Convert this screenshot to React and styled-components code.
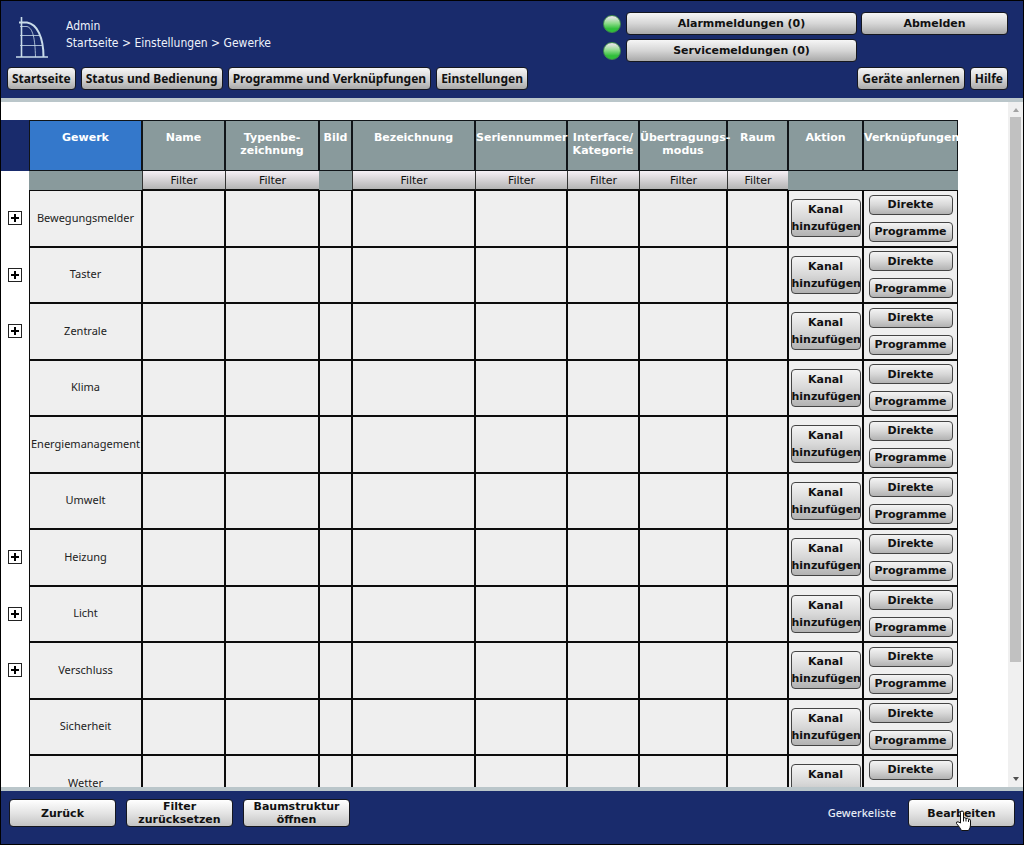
import React from "react";
import styled, { createGlobalStyle } from "styled-components";

const NAVY = "#192b6c";
const SLATE = "#899a9c";
const STRIP = "#bac6ca";
const BOLD_FONT = '"DejaVu Sans", Verdana, sans-serif';
const TEXT_FONT = '"Noto Sans", Tahoma, sans-serif';
const CRUMB_FONT = '"DejaVu Sans Condensed", "Noto Sans", sans-serif';

const GlobalStyle = createGlobalStyle`
  * { box-sizing: border-box; }
  body { margin: 0; background: #fff; font-family: ${TEXT_FONT}; font-size: 11px; color: #222; }
  button { font: inherit; color: #111; cursor: pointer; }
`;

const Page = styled.div`
  height: 100vh;
  display: flex;
  flex-direction: column;
  border: 1px solid #000;
  overflow: hidden;
`;

const Header = styled.header`
  display: flex;
  flex-direction: column;
  justify-content: space-between;
  gap: 5px;
  padding: 11px 15px 8px 6px;
  background: ${NAVY};
  border-bottom: 4px solid ${STRIP};
`;

const HeaderTop = styled.div`
  display: flex;
  justify-content: space-between;
`;

const Brand = styled.div`
  display: flex;
  gap: 17px;
  padding: 3px 0 0 8px;
`;

const UserInfo = styled.div`
  padding-top: 3px;
  color: #eef2fb;
  font: 12px/17px ${CRUMB_FONT};
`;

const Crumb = styled.a`
  color: inherit;
  text-decoration: none;
`;

const Status = styled.div`
  display: grid;
  grid-template-columns: 19px 231px 147px;
  gap: 4px;
  align-items: center;
  align-self: flex-start;
`;

const Led = styled.span`
  width: 18px;
  height: 18px;
  border-radius: 50%;
  border: 1px solid #3f8a4c;
  background: linear-gradient(#dfe3df 10%, #8fdc8c 45%, #2fbf3a 80%);
`;

const Nav = styled.nav`
  display: flex;
  gap: 5px;
`;

const Spacer = styled.span`
  flex: 1;
`;

const BarButton = styled.button`
  height: 23px;
  padding: 0 4px;
  border: 1px solid #15171f;
  border-radius: 4px;
  background: linear-gradient(#f6f6f6, #d6d6d6 50%, #a9a9a9);
  font: bold 11px/13px ${BOLD_FONT};
  white-space: nowrap;
`;

const NavButton = styled(BarButton)`
  font: bold 12px/16px ${TEXT_FONT};
`;

const FooterButton = styled(BarButton)`
  width: 107px;
  height: 28px;
  background: linear-gradient(#fff, #e4e4e4 50%, #c4c4c4);
  white-space: normal;
`;

const Main = styled.main`
  flex: 1;
  min-height: 0;
  display: flex;
`;

const ScrollArea = styled.div`
  flex: 1;
  padding-top: 18px;
  overflow: auto;
  scrollbar-width: none;
`;

const ScrollTrack = styled.div`
  width: 15px;
  display: flex;
  flex-direction: column;
  align-items: center;
  background: #f0f0f0;
`;

const ScrollThumb = styled.div`
  flex: 544;
  width: 11px;
  background: #c1c1c1;
`;

const ScrollRest = styled.div`
  flex: 110;
`;

const Arrow = styled.svg`
  width: 14px;
  height: 15px;
`;

const Table = styled.table`
  width: 957px;
  table-layout: fixed;
  border-collapse: separate;
  border-spacing: 0;
  text-align: center;
`;

const HeadCell = styled.th`
  height: 51px;
  padding: 10px 0 0;
  vertical-align: top;
  border: 1px solid #101418;
  background: ${(p) => (p.$active ? "#3478cb" : SLATE)};
  color: #fff;
  font: bold 11px/13px ${BOLD_FONT};
  white-space: nowrap;
`;

const HeadGutter = styled.td`
  padding: 0;
  background: ${NAVY};
`;

const FilterCell = styled.td`
  height: 19px;
  padding: 0;
  background: ${(p) => (p.$blank ? SLATE : "none")};
`;

const FilterButton = styled.button`
  display: block;
  width: 100%;
  height: 19px;
  padding: 0;
  border: 0;
  border-left: 1px solid #333;
  border-bottom: 1px solid #111;
  background: linear-gradient(#f6f0f6, #b4b4b4);
  font: 11px/17px ${BOLD_FONT};
`;

const Row = styled.tr`
  height: 57px;
  &:nth-child(even) { height: 56px; }
`;

const Cell = styled.td`
  padding: 0 0 1px;
  border: 1px solid #0c0c0c;
  background: #efefef;
  white-space: nowrap;
`;

const NameCell = styled(Cell)`
  padding-bottom: 3px;
`;

const Gutter = styled.td`
  padding: 0 0 1px;
`;

const Expand = styled.button`
  display: block;
  width: 14px;
  height: 14px;
  margin: 0 auto;
  padding: 0;
  border: 1px solid #222;
  background: #fff;
`;

const PlusIcon = styled.svg`
  display: block;
`;

const CellButton = styled.button`
  display: block;
  width: 84px;
  height: 20px;
  margin: 0 auto;
  padding: 0;
  border: 1px solid #444;
  border-radius: 4px;
  background: linear-gradient(#f4f4f4, #d8d8d8 50%, #b2b2b2);
  font: bold 11px/17px ${BOLD_FONT};
  & + & { margin-top: 7px; }
`;

const ChannelButton = styled(CellButton)`
  width: 70px;
  height: 38px;
`;

const Footer = styled.footer`
  display: flex;
  align-items: center;
  gap: 10px;
  padding: 8px 8px 17px;
  background: ${NAVY};
  border-top: 4px solid ${STRIP};
`;

const ListName = styled.span`
  padding-right: 2px;
  color: #e6ebf5;
  font: 500 11px/16px ${TEXT_FONT};
`;

const Hovered = styled.div`
  position: relative;
`;

const Pointer = styled.svg`
  position: absolute;
  left: 47px;
  top: 11px;
  pointer-events: none;
`;

const WIDTHS = [28, 113, 83, 94, 33, 123, 92, 72, 88, 61, 75, 95];

const HEADS = [
  ["Gewerk"],
  ["Name"],
  ["Typenbe-", "zeichnung"],
  ["Bild"],
  ["Bezeichnung"],
  ["Seriennummer"],
  ["Interface/", "Kategorie"],
  ["Übertragungs-", "modus"],
  ["Raum"],
  ["Aktion"],
  ["Verknüpfungen"],
];

const FILTERS = [false, true, true, false, true, true, true, true, true, false, false];

const TRADES = [
  { name: "Bewegungsmelder", open: true },
  { name: "Taster", open: true },
  { name: "Zentrale", open: true },
  { name: "Klima" },
  { name: "Energiemanagement" },
  { name: "Umwelt" },
  { name: "Heizung", open: true },
  { name: "Licht", open: true },
  { name: "Verschluss", open: true },
  { name: "Sicherheit" },
  { name: "Wetter" },
];

const Logo = () => (
  <svg width="34" height="44" viewBox="0 0 34 44" fill="none" stroke="#c9dcea" aria-hidden="true">
    <path d="M6.500 2V42" strokeWidth="1.600" />
    <path d="M4 7.500H12C22 9 28.500 22 28.500 42" strokeWidth="2" />
    <path d="M5 11.500H12C18 13 20 24 20.500 42M5 20.500H25M5 30.500H28" opacity="0.8" />
    <path d="M1 42H33" strokeWidth="1.500" />
  </svg>
);

export default function App() {
  return (
    <Page>
      <GlobalStyle />
      <Header>
        <HeaderTop>
          <Brand>
            <Logo />
            <UserInfo>
              <div>Admin</div>
              <div>
                <Crumb href="#start">Startseite</Crumb> &gt; <Crumb href="#settings">Einstellungen</Crumb> &gt;{" "}
                <Crumb href="#trades">Gewerke</Crumb>
              </div>
            </UserInfo>
          </Brand>
          <Status>
            <Led />
            <BarButton>Alarmmeldungen (0)</BarButton>
            <BarButton>Abmelden</BarButton>
            <Led />
            <BarButton>Servicemeldungen (0)</BarButton>
          </Status>
        </HeaderTop>
        <Nav>
          <NavButton>Startseite</NavButton>
          <NavButton>Status und Bedienung</NavButton>
          <NavButton>Programme und Verknüpfungen</NavButton>
          <NavButton>Einstellungen</NavButton>
          <Spacer />
          <NavButton>Geräte anlernen</NavButton>
          <NavButton>Hilfe</NavButton>
        </Nav>
      </Header>
      <Main>
        <ScrollArea>
          <Table>
            <colgroup>
              {WIDTHS.map((w, i) => (
                <col key={i} width={w} />
              ))}
            </colgroup>
            <thead>
              <tr>
                <HeadGutter />
                {HEADS.map((lines, i) => (
                  <HeadCell key={i} scope="col" $active={i === 0}>
                    {lines.map((line) => (
                      <div key={line}>{line}</div>
                    ))}
                  </HeadCell>
                ))}
              </tr>
              <tr>
                <Gutter />
                {FILTERS.map((on, i) => (
                  <FilterCell key={i} $blank={!on}>
                    {on && <FilterButton>Filter</FilterButton>}
                  </FilterCell>
                ))}
              </tr>
            </thead>
            <tbody>
              {TRADES.map((t) => (
                <Row key={t.name}>
                  <Gutter>
                    {t.open && (
                      <Expand aria-label={`${t.name} öffnen`}>
                        <PlusIcon width="12" height="12" viewBox="0 0 12 12" stroke="#000" strokeWidth="2">
                          <path d="M2 6H10M6 2V10" />
                        </PlusIcon>
                      </Expand>
                    )}
                  </Gutter>
                  <NameCell>{t.name}</NameCell>
                  {HEADS.slice(1, 9).map((h) => (
                    <Cell key={h[0]} />
                  ))}
                  <Cell>
                    <ChannelButton>
                      Kanal
                      <br />
                      hinzufügen
                    </ChannelButton>
                  </Cell>
                  <Cell>
                    <CellButton>Direkte</CellButton>
                    <CellButton>Programme</CellButton>
                  </Cell>
                </Row>
              ))}
            </tbody>
          </Table>
        </ScrollArea>
        <ScrollTrack>
          <Arrow viewBox="0 0 14 15">
            <path d="M4 10L7 6L10 10Z" fill="#a3a3a3" />
          </Arrow>
          <ScrollThumb />
          <ScrollRest />
          <Arrow viewBox="0 0 14 15">
            <path d="M4 5L7 9L10 5Z" fill="#505050" />
          </Arrow>
        </ScrollTrack>
      </Main>
      <Footer>
        <FooterButton>Zurück</FooterButton>
        <FooterButton>Filter zurücksetzen</FooterButton>
        <FooterButton>Baumstruktur öffnen</FooterButton>
        <Spacer />
        <ListName>Gewerkeliste</ListName>
        <Hovered>
          <FooterButton>Bearbeiten</FooterButton>
          <Pointer width="17" height="22" viewBox="0 0 17 22" fill="#fff" stroke="#111" strokeWidth="1">
            <path d="M5.500 13V2.500Q5.500 1 7 1T8.500 2.500V8Q10 7 11 8.500Q12.500 7.500 13.500 9.200Q15.500 8.500 15.500 11V15Q15.500 18 13.500 20.500H6.500Q5 17.500 1.500 13.500Q1 11.500 3 11.800Z" />
            <path d="M8.500 8V11.500M11 8.500V11.500M13.500 9.500V12" />
          </Pointer>
        </Hovered>
      </Footer>
    </Page>
  );
}
